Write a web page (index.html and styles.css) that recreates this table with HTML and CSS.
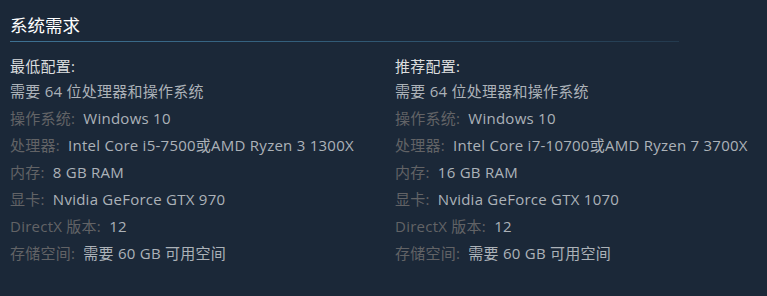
FILE: index.html
```html
<!DOCTYPE html>
<html lang="zh-CN">
<head>
<meta charset="utf-8">
<link rel="stylesheet" href="styles.css">
</head>
<body>
<div class="sysreq">
  <h2 class="title">系统需求</h2>
  <div class="cols">
    <div class="col">
      <div class="head">最低配置:</div>
      <ul class="list">
        <li>需要 64 位处理器和操作系统</li>
        <li><span class="lbl">操作系统:</span> Windows 10</li>
        <li><span class="lbl">处理器:</span> Intel Core i5-7500或AMD Ryzen 3 1300X</li>
        <li><span class="lbl">内存:</span> 8 GB RAM</li>
        <li><span class="lbl">显卡:</span> Nvidia GeForce GTX 970</li>
        <li><span class="lbl">DirectX 版本:</span> 12</li>
        <li><span class="lbl">存储空间:</span> 需要 60 GB 可用空间</li>
      </ul>
    </div>
    <div class="col">
      <div class="head">推荐配置:</div>
      <ul class="list">
        <li>需要 64 位处理器和操作系统</li>
        <li><span class="lbl">操作系统:</span> Windows 10</li>
        <li><span class="lbl">处理器:</span> Intel Core i7-10700或AMD Ryzen 7 3700X</li>
        <li><span class="lbl">内存:</span> 16 GB RAM</li>
        <li><span class="lbl">显卡:</span> Nvidia GeForce GTX 1070</li>
        <li><span class="lbl">DirectX 版本:</span> 12</li>
        <li><span class="lbl">存储空间:</span> 需要 60 GB 可用空间</li>
      </ul>
    </div>
  </div>
</div>
</body>
</html>
```

FILE: styles.css
```css
html, body {
  margin: 0;
  padding: 0;
  background: #1b2838;
  height: 100%;
}
.sysreq {
  padding: 13px 0 0 10px;
  font-family: "Open Sans", "Noto Sans CJK SC", sans-serif;
  font-size: 15px;
  letter-spacing: 0.25px;
  color: #acb2b8;
}
.title {
  margin: 0;
  width: 669px;
  font-family: "Noto Sans CJK SC", sans-serif;
  font-size: 17.5px;
  font-weight: normal;
  letter-spacing: 0;
  color: #ffffff;
  line-height: 24px;
  padding-bottom: 5px;
  background: linear-gradient(to right, #3e7192 0%, #34607d 40%, #243a4e 100%) no-repeat left bottom / 100% 1px;
}
.cols {
  display: grid;
  grid-template-columns: 385px 1fr;
  padding-top: 14px;
}
.head {
  color: #dcdedf;
  line-height: 20px;
}
.list {
  list-style: none;
  margin: 2px 0 0;
  padding: 0;
}
.list li {
  height: 27px;
  line-height: 27px;
  white-space: nowrap;
}
.lbl {
  color: #626366;
  margin-right: 4px;
}
```
